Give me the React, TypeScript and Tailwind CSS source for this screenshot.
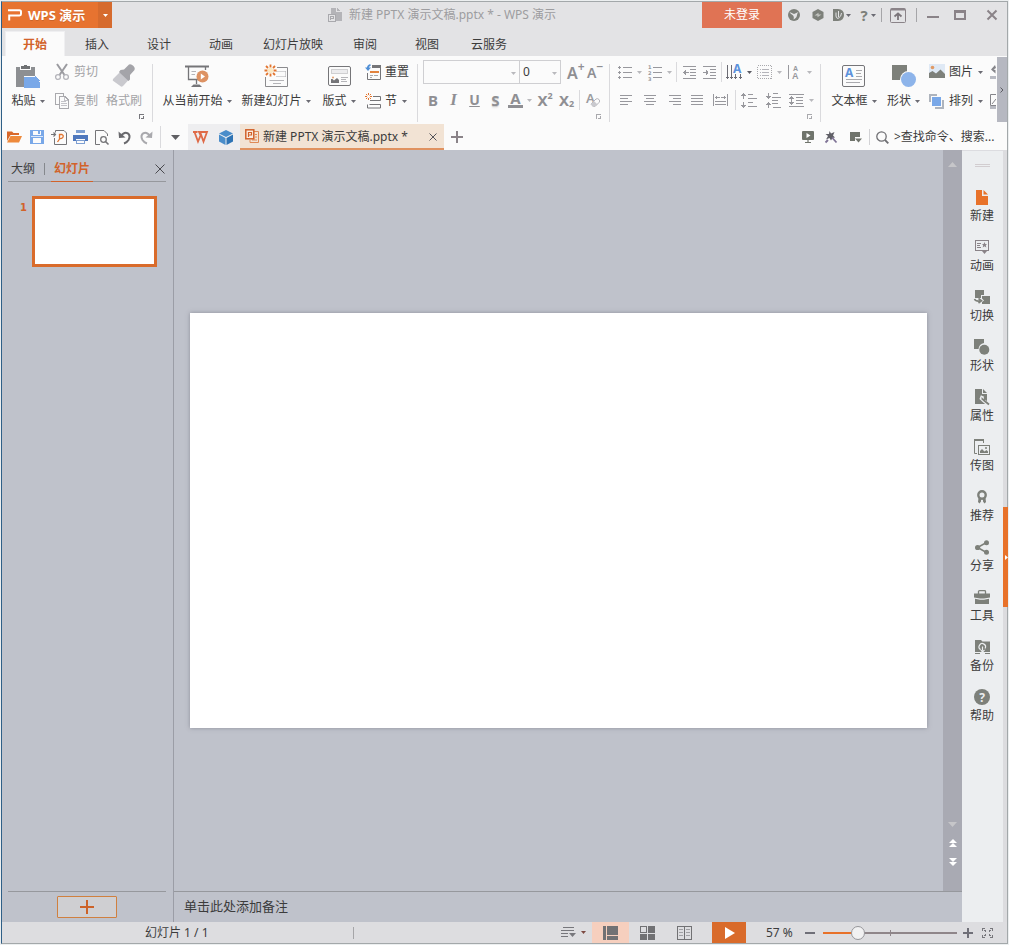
import React, { useState } from "react";

type IconProps = { w: number; h: number; crisp?: boolean; className?: string; children: React.ReactNode };

function Icon({ w, h, crisp, className, children }: IconProps) {
  return (
    <svg
      width={w}
      height={h}
      viewBox={`0 0 ${w} ${h}`}
      fill="none"
      shapeRendering={crisp ? "crispEdges" : "auto"}
      className={`shrink-0 overflow-visible ${className ?? ""}`}
      aria-hidden="true"
    >
      {children}
    </svg>
  );
}

function Caret({ color = "#6b6b73", w = 5 }: { color?: string; w?: number }) {
  return (
    <Icon w={w} h={3} className="block">
      <path d={`M0 0H${w}L${w / 2} 3z`} fill={color} />
    </Icon>
  );
}

const GRAY = "#98989d";
const DARK = "#7d807a";

/* ---------- title bar ---------- */

function TitleBar() {
  return (
    <header className="flex h-[26px] shrink-0 items-stretch">
      <button className="flex w-24 items-center gap-[6px] bg-[#e77330] pl-[6px] text-[13px] font-bold text-white text-shadow-2xs">
        <Icon w={14} h={12}>
          <path d="M0 1.200H11.500Q13 1.200 13 2.700V5Q13 6.400 11.500 6.400H1.200V11.500" stroke="#fff" strokeWidth="2" />
        </Icon>
        <span className="whitespace-nowrap">WPS 演示</span>
      </button>
      <button aria-label="应用菜单" className="flex w-[14px] items-center justify-center bg-[#d66b2e]">
        <Caret color="#fff" />
      </button>
      <div className="flex min-w-0 flex-1 items-center justify-center gap-[6px] pl-[70px] text-[#9d9da0]">
        <Icon w={15} h={15} crisp>
          <path d="M3 0H8V4H14V13H8V6H3z" fill="#b4b4b8" />
          <path d="M9 0L12 3H9z" fill="#b4b4b8" />
          <rect x="0.500" y="6.500" width="7" height="7" stroke="#a9a9ad" fill="#e3e3e5" />
          <path d="M2.500 12V8.500H5.500V10.500H3" stroke="#a9a9ad" />
        </Icon>
        <span className="truncate">新建 PPTX 演示文稿.pptx * - WPS 演示</span>
      </div>
      <button className="w-20 bg-[#e07354] text-white">未登录</button>
      <div className="flex items-center text-[#7d807a]">
        <button aria-label="皮肤" className="flex w-6 justify-center">
          <Icon w={12} h={12}>
            <circle cx="6" cy="6" r="6" fill="#7d807a" />
            <path d="M1.500 3L6 5L10.500 3Q9 4.500 9 6Q9 8.500 5.500 10.500Q6.500 7.500 4.500 6Q2.500 5 1.500 3z" fill="#e3e3e5" />
          </Icon>
        </button>
        <button aria-label="云服务中心" className="flex w-[23px] justify-center">
          <Icon w={12} h={12}>
            <path d="M6 0L11.500 3V9L6 12L0.500 9V3z" fill="#7d807a" />
            <path d="M2.500 6.500L6.500 3.800V5.500L9.500 5.500L5.500 8.300V6.500z" fill="#c3c5c1" />
          </Icon>
        </button>
        <button aria-label="稻壳" className="flex w-[26px] items-center justify-center gap-[2px]">
          <Icon w={11} h={12}>
            <path d="M0 0H5Q11 0.500 11 6Q11 11.500 5 12H0z" fill="#7d807a" />
            <path d="M3 3.500V7Q3 9 5 9.500M5.500 2L5.500 8M8.500 4Q8.500 7.500 5 9.500" stroke="#e3e3e5" strokeWidth="1" />
          </Icon>
          <Caret />
        </button>
        <button aria-label="帮助菜单" className="flex w-[26px] items-center justify-center gap-[3px] text-[15px] font-bold">
          ?<Caret />
        </button>
        <span className="mr-[8px] h-[14px] w-px bg-[#a5a5a8]" />
        <button aria-label="折叠功能区">
          <Icon w={16} h={15}>
            <rect x="0.500" y="0.500" width="15" height="14" rx="1" stroke="#8a8388" />
            <path d="M1 1.500H15" stroke="#8a8388" strokeWidth="2" />
            <path d="M8 12V6M4.500 8.500L8 5.500L11.500 8.500" stroke="#7b757a" strokeWidth="1.800" />
          </Icon>
        </button>
        <span className="ml-[10px] mr-[8px] h-[14px] w-px bg-[#a5a5a8]" />
        <button aria-label="最小化" className="flex w-4 justify-center">
          <Icon w={12} h={12} crisp><rect y="7" width="12" height="2" fill="#8a8388" /></Icon>
        </button>
        <button aria-label="最大化" className="ml-[11px] flex w-4 justify-center">
          <Icon w={12} h={10} crisp>
            <path d="M0 0H12V10H0zM2 3V8H10V3z" fillRule="evenodd" fill="#8a8388" />
          </Icon>
        </button>
        <button aria-label="关闭" className="ml-4 mr-[7px] flex w-4 justify-center">
          <Icon w={10} h={10}><path d="M0.500 0.500L9.500 9.500M9.500 0.500L0.500 9.500" stroke="#8a8388" strokeWidth="2" /></Icon>
        </button>
      </div>
    </header>
  );
}

/* ---------- ribbon tabs ---------- */

function Tabs() {
  const tab = "h-full w-[62px] pt-[2px]";
  return (
    <nav className="flex h-7 shrink-0 items-end pt-[3px]">
      <button className="ml-[3px] mr-px h-full w-[60px] border border-b-0 border-[#efeff1] bg-[#fbfbfb] pt-[2px] font-bold text-[#d2622a]">开始</button>
      <button className={tab}>插入</button>
      <button className={tab}>设计</button>
      <button className={tab}>动画</button>
      <button className="h-full w-[82px] pt-[2px]">幻灯片放映</button>
      <button className={tab}>审阅</button>
      <button className={tab}>视图</button>
      <button className={tab}>云服务</button>
    </nav>
  );
}

/* ---------- ribbon ---------- */

type BigProps = { icon: React.ReactNode; label: string; className: string; caret?: boolean };

function Big({ icon, label, className, caret = true }: BigProps) {
  return (
    <button className={`flex shrink-0 flex-col items-center pt-1 ${className}`}>
      <span className="flex h-6 items-center justify-center">{icon}</span>
      <span className="flex h-[26px] items-center gap-1 whitespace-nowrap">
        {label}
        {caret && <Caret />}
      </span>
    </button>
  );
}

function Tool({ label, className = "w-5", children }: { label: string; className?: string; children: React.ReactNode }) {
  return (
    <button aria-label={label} className={`flex h-6 shrink-0 items-center justify-center ${className}`}>
      {children}
    </button>
  );
}

function Drop({ label, dark }: { label: string; dark?: boolean }) {
  return (
    <button aria-label={label} className="flex h-6 w-[9px] shrink-0 items-center justify-center">
      <Caret color={dark ? "#5b5b63" : "#b9b9bd"} />
    </button>
  );
}

const GroupLine = () => <span className="mt-1 h-[58px] w-px shrink-0 bg-[#dadadd]" />;
const SmallLine = ({ className = "" }: { className?: string }) => <span className={`h-5 w-px shrink-0 bg-[#dadadd] ${className}`} />;

function Launcher({ label, className = "", color = "#a9a9ad" }: { label: string; className?: string; color?: string }) {
  return (
    <button aria-label={label} className={`absolute bottom-[5px] ${className}`}>
      <Icon w={5} h={5} crisp>
        <path d="M0 0H5V1H1V5H0zM2 4H4V2H5V5H2z" fill={color} />
      </Icon>
    </button>
  );
}

function Lines({ rows }: { rows: [number, number][] }) {
  return (
    <Icon w={14} h={10} crisp>
      {rows.map(([x, len], i) => (
        <rect key={i} x={x} y={i * 3} width={len} height="1" fill={GRAY} />
      ))}
    </Icon>
  );
}

function Burst({ x, y }: { x: number; y: number }) {
  return (
    <g transform={`translate(${x} ${y})`}>
      <path d="M0 -6V-3M0 3V6M-6 0H-3M3 0H6M-4.500 -4.500L-2.500 -2.500M4.500 -4.500L2.500 -2.500M-4.500 4.500L-2.500 2.500M4.500 4.500L2.500 2.500" stroke="#e2752f" strokeWidth="1.800" />
      <circle r="2.800" fill="#fbe9c4" />
    </g>
  );
}

function Ribbon() {
  return (
    <section className="flex h-[68px] shrink-0 bg-[#fbfbfb]">
      <div className="flex min-w-0 flex-1 overflow-hidden pt-1">
        {/* clipboard */}
        <div className="relative flex w-[150px] shrink-0">
          <Big
            className="w-[52px]"
            label="粘贴"
            icon={
              <Icon w={24} h={23} crisp>
                <path d="M0 2H4V5H15V2H19V11H8V22H0z" fill="#8d8f92" />
                <path d="M5 1H8V0H11V1H14V4H5z" fill="#6f7173" />
                <path d="M8 12H18L24 18V23H8z" fill="#79a8e8" />
                <path d="M19 11L24 16H19z" fill="#79a8e8" />
              </Icon>
            }
          />
          <div className="flex w-[47px] shrink-0 flex-col gap-[5px] pl-px text-[#a3a3a6]">
            <button className="flex h-6 items-center gap-[5px] whitespace-nowrap">
              <Icon w={14} h={16}>
                <path d="M2 0L9.500 11M12 0L4.500 11" stroke="#9b9ba0" strokeWidth="2" />
                <circle cx="3" cy="13" r="2.400" stroke="#b4b4ba" strokeWidth="1.300" />
                <circle cx="11" cy="13" r="2.400" stroke="#b4b4ba" strokeWidth="1.300" />
              </Icon>
              剪切
            </button>
            <button className="flex h-6 items-center gap-[5px] whitespace-nowrap">
              <Icon w={14} h={16} crisp>
                <path d="M4 11.500H0.500V0.500H8.500V3" stroke="#a9a9ad" />
                <path d="M4.500 3.500H10L13.500 7V15.500H4.500z" stroke="#a9a9ad" />
                <path d="M6 8.500H11M6 10.500H12M6 12.500H12M9.500 4V7.500H13" stroke="#c3c3c8" />
              </Icon>
              复制
            </button>
          </div>
          <Big
            className="w-[46px] text-[#a3a3a6]"
            label="格式刷"
            caret={false}
            icon={
              <Icon w={24} h={24}>
                <path d="M8 8L1 15Q0 16.500 2 17.500L9 22.500Q10.500 23 11.500 21.500L16.500 16z" fill="#c9c9ce" />
                <path d="M8.500 6L12 5.500L17 0.500Q19 -0.500 21.500 2Q23.500 4 22.500 6L18 11L18 15.500L16.500 17L7 8z" fill="#a4a4a9" />
              </Icon>
            }
          />
          <Launcher label="剪贴板选项" className="right-2" color="#77777c" />
        </div>
        <GroupLine />

        {/* slides */}
        <div className="flex w-[264px] shrink-0 pl-[5px]">
          <Big
            className="w-[78px]"
            label="从当前开始"
            icon={
              <Icon w={25} h={23}>
                <path d="M0 1.500H24" stroke="#757578" strokeWidth="2" />
                <path d="M3.500 2V14.500H18M20.500 2V5M11.500 15V19" stroke="#757578" strokeWidth="1.300" />
                <path d="M6 22L8.500 19.500H14.500L17 22z" fill="#757578" />
                <path d="M6.500 6.500H11M6.500 9.500H10" stroke="#b4b4b8" />
                <circle cx="17.500" cy="11.500" r="6" fill="#dd9263" />
                <path d="M15.800 8.500V14.500L20 11.500z" fill="#fff" />
              </Icon>
            }
          />
          <Big
            className="w-20"
            label="新建幻灯片"
            icon={
              <Icon w={24} h={24}>
                <path d="M13 3.500H23.500V22.500H1.500V13" stroke="#8b8b8e" />
                <path d="M12.500 7.500H21.500M12.500 12.500H21.500M21.500 7.500V12.500" stroke="#aaaaae" strokeDasharray="1 1" />
                <path d="M5.500 16.500H20M9 19.500H17" stroke="#b4b4b8" />
                <Burst x={6.500} y={6.500} />
              </Icon>
            }
          />
          <Big
            className="w-[46px]"
            label="版式"
            icon={
              <Icon w={23} h={20}>
                <rect x="0.500" y="0.500" width="22" height="19" rx="1.500" stroke="#757578" />
                <rect x="3.500" y="3.500" width="16" height="4" fill="#ececee" stroke="#aaaaae" strokeDasharray="1 1" />
                <path d="M3 17V13H4.500L6 14.500L9 12L11 14V17z" fill="#757578" />
                <circle cx="5" cy="11.500" r="1" fill="#e2a06f" />
                <path d="M13 11.500H20M13 13.500H18M13 15.500H19" stroke="#b4b4b8" />
              </Icon>
            }
          />
          <div className="flex flex-col gap-[5px] pl-[3px]">
            <button className="flex h-6 items-center gap-1 whitespace-nowrap">
              <Icon w={16} h={16}>
                <path d="M7 2.500H15.500V15.500H2.500V9" stroke="#757578" />
                <path d="M7 2.500H16" stroke="#757578" strokeWidth="3" />
                <path d="M5 8H14" stroke="#e2833f" strokeWidth="2" />
                <path d="M5 11.500H8M9 11.500H13M5 13.500H7" stroke="#aaaaae" />
                <path d="M5.500 0.800Q2.500 1.500 2.800 5" stroke="#4f8fd6" strokeWidth="1.800" />
                <path d="M0 3.500H6L3 7z" fill="#4f8fd6" />
              </Icon>
              重置
            </button>
            <button className="flex h-6 items-center gap-1 whitespace-nowrap">
              <Icon w={16} h={16}>
                <path d="M8 3.500H15.500V7.500H5M4.500 11.500H15.500V15H2.500V11.500" stroke="#757578" />
                <path d="M3.500 0V2M3.500 5V7M0 3.500H2M5 3.500H7M1 1L2.300 2.300M6 1L4.700 2.300M1 6L2.300 4.700M6 6L4.700 4.700" stroke="#e2752f" />
              </Icon>
              节
              <span className="ml-px"><Caret /></span>
            </button>
          </div>
        </div>
        <GroupLine />

        {/* font */}
        <div className="relative flex w-[191px] shrink-0 flex-col gap-1 pl-[5px] text-[#8f8f93]">
          <div className="flex h-6 items-center">
            <span className="relative flex">
              <select aria-label="字体" className="h-6 w-[97px] appearance-none border border-[#cfcfd2] bg-[#fbfbfb] pl-1 text-[#3c3c3c] outline-none">
                <option></option>
              </select>
              <span className="pointer-events-none absolute right-1 top-3"><Caret color="#b9b9bd" /></span>
            </span>
            <span className="relative flex">
              <select aria-label="字号" className="h-6 w-[41px] appearance-none border border-l-0 border-[#cfcfd2] bg-[#fbfbfb] pl-[3px] text-[#3c3c3c] outline-none">
                <option>0</option>
              </select>
              <span className="pointer-events-none absolute right-1 top-3"><Caret color="#b9b9bd" /></span>
            </span>
            <button aria-label="增大字号" className="ml-[6px] flex w-[20px] items-start pt-px text-[16px] font-semibold leading-6">
              A<span className="text-[12px] leading-3">+</span>
            </button>
            <button aria-label="减小字号" className="flex w-[18px] items-start pt-px text-[14px] font-semibold leading-6">
              A<span className="text-[12px] leading-3">−</span>
            </button>
          </div>
          <div className="flex h-6 items-center">
            <Tool label="加粗" className="w-[20px] text-[15px] font-bold">B</Tool>
            <Tool label="倾斜" className="w-[21px] font-['Liberation_Serif'] text-[17px] font-bold italic">I</Tool>
            <Tool label="下划线" className="w-[21px] text-[14px] font-bold underline">U</Tool>
            <Tool label="阴影" className="w-[21px] text-[15px] font-bold text-shadow-sm">S</Tool>
            <Tool label="字体颜色" className="w-[19px]">
              <span className="flex h-[16px] w-[15px] items-center justify-center border-b-[3px] border-[#8f8f93] pb-[1px] text-[15px] font-bold leading-3">A</span>
            </Tool>
            <Drop label="字体颜色选项" />
            <Tool label="上标" className="w-[22px] text-[15px] font-bold">
              X<span className="mb-2 text-[9px] leading-3">2</span>
            </Tool>
            <Tool label="下标" className="w-[21px] text-[15px] font-bold">
              X<span className="mt-2 text-[9px] leading-3">2</span>
            </Tool>
            <SmallLine className="mx-[2px]" />
            <Tool label="清除格式" className="w-[22px]">
              <Icon w={15} h={16}>
                <text x="0" y="11" fontSize="13" fontWeight="600" fill="#9b9ba0">A</text>
                <path d="M5.500 11.500L10 7Q11.500 6 13 7.500Q14.500 9 13 10.500L9 14.500Q7.500 15 6 13.500Q4.800 12.500 5.500 11.500z" fill="#fbfbfb" stroke="#b4b4ba" />
                <path d="M8 9L11.500 12.500L9 14.500H7L5.500 12z" fill="#c9c9ce" />
              </Icon>
            </Tool>
          </div>
          <Launcher label="字体选项" className="right-2" />
        </div>
        <GroupLine />

        {/* paragraph */}
        <div className="relative flex w-[210px] shrink-0 flex-col gap-1 pl-[4px]">
          <div className="flex h-6 items-center pl-px">
            <Tool label="项目符号">
              <Icon w={14} h={13} crisp>
                <path d="M0 1H3V2H0zM1 0H2V3H1zM0 6H3V7H0zM1 5H2V8H1zM0 11H3V12H0zM1 10H2V13H1zM5 1H14V2H5zM5 6H14V7H5zM5 11H14V12H5z" fill={GRAY} />
              </Icon>
            </Tool>
            <Drop label="项目符号选项" />
            <Tool label="编号" className="ml-px w-5">
              <Icon w={14} h={17} className="font-['DejaVu_Sans']">
                <text x="0" y="5" fontSize="5" fontWeight="bold" fill={GRAY}>1</text>
                <text x="0" y="11" fontSize="5" fontWeight="bold" fill={GRAY}>2</text>
                <text x="0" y="17" fontSize="5" fontWeight="bold" fill={GRAY}>3</text>
                <path d="M5 3H14V4H5zM5 8H14V9H5zM5 13H14V14H5z" fill={GRAY} />
              </Icon>
            </Tool>
            <Drop label="编号选项" />
            <SmallLine className="mx-[2px]" />
            <Tool label="减少缩进">
              <Icon w={13} h={13} crisp>
                <path d="M0 0H13V1H0zM7 3H13V4H7zM7 6H13V7H7zM7 9H13V10H7zM0 12H13V13H0zM0 6H6V7H0zM1 5H3V8H1zM2 4H3V9H2z" fill={GRAY} />
              </Icon>
            </Tool>
            <Tool label="增加缩进">
              <Icon w={13} h={13} crisp>
                <path d="M0 0H13V1H0zM7 3H13V4H7zM7 6H13V7H7zM7 9H13V10H7zM0 12H13V13H0zM0 6H5V7H0zM3 5H5V8H3zM3 4H4V9H3z" fill={GRAY} />
              </Icon>
            </Tool>
            <SmallLine className="mx-[2px]" />
            <Tool label="文字方向" className="w-[21px]">
              <Icon w={17} h={16} crisp>
                <path d="M1 1H2V15H1zM5 1H6V15H5zM9 10H10V15H9zM14 10H15V15H14z" fill="#6b6b73" />
                <path d="M0 13H3V14H0zM4 13H7V14H4zM8 13H11V14H8zM13 13H16V14H13z" fill="#6b6b73" />
                <text x="7" y="9" fontSize="12" fontWeight="bold" fill="#5c92dc">A</text>
              </Icon>
            </Tool>
            <Drop label="文字方向选项" dark />
            <Tool label="对齐文本" className="w-[21px]">
              <Icon w={15} h={14} crisp>
                <rect x="0.500" y="0.500" width="14" height="13" stroke="#a9a9ad" strokeDasharray="1 1" />
                <path d="M3 4H4V5H3zM5 4H12V5H5zM3 7H4V8H3zM5 7H12V8H5zM3 10H4V11H3zM5 10H12V11H5z" fill="#b4b4ba" />
              </Icon>
            </Tool>
            <Drop label="对齐文本选项" />
            <Tool label="字符间距" className="w-[21px]">
              <Icon w={13} h={16} className="font-['Liberation_Sans']">
                <path d="M0 1H1V15H0z" fill={GRAY} />
                <text x="5" y="7" fontSize="7" fontWeight="bold" fill={GRAY}>A</text>
                <text x="4" y="15" fontSize="9" fontWeight="bold" fill={GRAY}>A</text>
              </Icon>
            </Tool>
            <Drop label="字符间距选项" />
          </div>
          <div className="flex h-6 items-center">
            <Tool label="左对齐" className="w-6"><Lines rows={[[1, 12], [1, 8], [1, 12], [1, 8]]} /></Tool>
            <Tool label="居中" className="w-6"><Lines rows={[[1, 12], [3, 8], [1, 12], [3, 8]]} /></Tool>
            <Tool label="右对齐" className="w-6"><Lines rows={[[2, 12], [6, 8], [2, 12], [6, 8]]} /></Tool>
            <Tool label="两端对齐" className="w-[22px]"><Lines rows={[[1, 12], [1, 12], [1, 12], [1, 12]]} /></Tool>
            <Tool label="分散对齐" className="w-6">
              <Icon w={15} h={12} crisp>
                <path d="M0 0H1V12H0zM14 0H15V12H14zM2 3H7V4H2zM8 3H13V4H8zM3 2H4V5H3zM11 2H12V5H11zM2 7H13V8H2zM2 10H13V11H2z" fill={GRAY} />
              </Icon>
            </Tool>
            <SmallLine className="ml-[3px] mr-px" />
            <Tool label="行距" className="w-6">
              <Icon w={16} h={15} crisp>
                <path d="M2 0H3V6H2zM1 1H4V2H1zM0 2H5V3H0zM2 9H3V15H2zM0 12H5V13H0zM1 13H4V14H1zM7 1H12V2H7zM7 5H16V6H7zM7 9H12V10H7zM7 13H16V14H7z" fill={GRAY} />
              </Icon>
            </Tool>
            <Tool label="段前间距" className="w-6">
              <Icon w={15} h={15} crisp>
                <path d="M2 0H3V6H2zM0 3H5V4H0zM1 4H4V5H1zM2 9H3V15H2zM1 10H4V11H1zM0 11H5V12H0zM7 0H12V1H7zM6 4H15V5H6zM6 7H12V8H6zM6 10H12V11H6zM7 14H15V15H7z" fill={GRAY} />
              </Icon>
            </Tool>
            <Tool label="段落间距" className="w-[22px]">
              <Icon w={15} h={13} crisp>
                <path d="M0 0H15V1H0zM7 3H14V4H7zM7 6H14V7H7zM7 9H14V10H7zM0 12H15V13H0zM2 2H3V11H2zM0 4H5V5H0zM1 3H4V4H1zM0 8H5V9H0zM1 9H4V10H1z" fill={GRAY} />
              </Icon>
            </Tool>
            <Drop label="段落间距选项" />
          </div>
          <Launcher label="段落选项" className="right-2" />
        </div>
        <GroupLine />

        {/* insert objects */}
        <div className="flex shrink-0 pl-[5px]">
          <Big
            className="w-14"
            label="文本框"
            icon={
              <Icon w={24} h={22}>
                <rect x="0.500" y="0.500" width="22" height="21" rx="1.500" stroke="#757578" />
                <text x="3" y="12" fontSize="12" fontWeight="bold" fill="#5c92dc">A</text>
                <path d="M14 5.500H20M14 8.500H19M14 11.500H20M4 14.500H20M4 17.500H18" stroke="#aaaaae" />
              </Icon>
            }
          />
          <Big
            className="w-[43px]"
            label="形状"
            icon={
              <Icon w={24} h={23}>
                <rect width="15" height="15" fill="#7d807a" />
                <circle cx="16.500" cy="14.500" r="8.500" fill="#fbfbfb" />
                <circle cx="16.500" cy="14.500" r="7.500" fill="#8db4ea" />
              </Icon>
            }
          />
          <div className="flex shrink-0 flex-col gap-[5px] pl-1">
            <button className="flex h-6 items-center gap-1 whitespace-nowrap">
              <Icon w={16} h={15} className="mb-[2px]">
                <rect width="16" height="12" fill="#dfe9f5" />
                <circle cx="3.500" cy="3.500" r="1.800" fill="#e09a65" />
                <path d="M0 14V9L3.500 7L7 9.500L11.500 5.500L16 10V14z" fill="#7d807a" />
              </Icon>
              图片
              <span className="ml-px"><Caret /></span>
            </button>
            <button className="flex h-6 items-center gap-1 whitespace-nowrap">
              <Icon w={16} h={15} crisp>
                <path d="M0 0H8V2H2V8H0zM15 6V15H6V13H13V6z" fill="#aeb4bd" />
                <rect x="3" y="3" width="9" height="9" fill="#79a8e8" />
              </Icon>
              排列
              <span className="ml-px"><Caret /></span>
            </button>
          </div>
          <div className="ml-[6px] flex w-[7px] shrink-0 flex-col gap-[5px] overflow-hidden">
            <Tool label="填充" className="w-[7px]">
              <Icon w={6} h={14}>
                <path d="M5 0L1 4.500L5.500 8.500V5L3.500 4.500L6 3z" fill="#85858a" />
                <rect y="11" width="6" height="3" fill="#b8bac2" />
              </Icon>
            </Tool>
            <Tool label="轮廓" className="w-[7px]">
              <Icon w={6} h={15}>
                <path d="M6 0.500H0.500V11.500H6M2 10L6 5" stroke="#85858a" />
                <rect y="12" width="6" height="3" fill="#b8bac2" />
              </Icon>
            </Tool>
          </div>
        </div>
      </div>
      <button aria-label="向右滚动" className="mt-px flex h-[65px] w-[10px] shrink-0 items-center justify-center bg-[#b6b8c1]">
        <Icon w={4} h={6}><path d="M0.500 0.500L3 3L0.500 5.500" stroke="#5d5d63" /></Icon>
      </button>
    </section>
  );
}

/* ---------- quick access and document tabs ---------- */

function QuickBar() {
  const cell = "flex w-[22px] shrink-0 justify-center";
  return (
    <section className="flex h-[26px] shrink-0 items-center bg-[#fbfbfb] pl-px">
      <button aria-label="打开" className={cell}>
        <Icon w={15} h={12}>
          <path d="M0 10V0.500H5L6.500 2H12V4H3.500z" fill="#d9682a" />
          <path d="M3.500 5H15L12 11.500H0z" fill="#ee8a3c" />
        </Icon>
      </button>
      <button aria-label="保存" className={`${cell} ml-px`}>
        <Icon w={14} h={14} crisp>
          <path d="M0 0H13L14 1V14H0z" fill="#79a8e8" />
          <path d="M3 1H11V5H3zM3 8H11V13H3z" fill="#fbfbfb" />
          <path d="M1 6H13V7H1z" fill="#dbe8fa" />
          <rect x="8" y="1" width="2" height="3" fill="#79a8e8" />
        </Icon>
      </button>
      <button aria-label="输出为PDF" className={cell}>
        <Icon w={16} h={15}>
          <path d="M4.500 2.500V0.500H13L15.500 3V14.500H3.500V8" stroke="#757578" />
          <path d="M0 4.500H4M2.500 2.500L4.500 4.500L2.500 6.500" stroke="#757578" strokeWidth="1.200" />
          <path d="M6.500 12L8.500 9V4.500H11Q13 5.500 11.800 7.500Q10.500 8.700 8.500 8.500" stroke="#e2752f" strokeWidth="1.300" />
        </Icon>
      </button>
      <button aria-label="打印" className={`${cell} -ml-px`}>
        <Icon w={15} h={14} crisp>
          <rect x="3" y="0" width="9" height="3" fill="#7d9fd2" />
          <path d="M0 5H15V11H12V9H3V11H0z" fill="#4f78bd" />
          <path d="M3 10H12V14H3z" fill="#7d9fd2" />
          <path d="M4 11H11V13H4z" fill="#fbfbfb" />
        </Icon>
      </button>
      <button aria-label="打印预览" className={cell}>
        <Icon w={14} h={15}>
          <path d="M5 14.500H0.500V0.500H9L12.500 4V6" stroke="#757578" />
          <circle cx="8.500" cy="9.500" r="2.800" stroke="#757578" strokeWidth="1.300" />
          <path d="M10.500 11.500L13.500 14.500" stroke="#757578" strokeWidth="1.600" />
        </Icon>
      </button>
      <button aria-label="撤销" className={cell}>
        <Icon w={13} h={13}>
          <path d="M0.500 0.500L1 7L7.500 6.500z" fill="#68686c" />
          <path d="M3 5Q6 0.800 9.500 2.200Q13 4.500 10.500 9Q9 11.500 6 12.500" stroke="#68686c" strokeWidth="2" />
        </Icon>
      </button>
      <button aria-label="恢复" className={cell}>
        <Icon w={13} h={13}>
          <path d="M12.500 0.500L12 7L5.500 6.500z" fill="#a9a9ad" />
          <path d="M10 5Q7 0.800 3.500 2.200Q0 4.500 2.500 9Q4 11.500 7 12.500" stroke="#a9a9ad" strokeWidth="2" />
        </Icon>
      </button>
      <span className="ml-[3px] h-[22px] w-px shrink-0 bg-[#dadadd]" />
      <button aria-label="更多命令" className="flex w-[27px] shrink-0 justify-center pl-[2px]">
        <Icon w={9} h={5}><path d="M0 0H9L4.500 5z" fill="#5f5f63" /></Icon>
      </button>
      <div className="flex h-full w-[52px] shrink-0 items-center bg-[#eeeef0]">
        <button aria-label="WPS 首页" className="flex w-[25px] justify-center">
          <Icon w={16} h={12}>
            <path d="M0 1H4.500M1.500 1L5 10.500L8 3.500L10.500 10.500L14 1H6L8 5" stroke="#df6a47" strokeWidth="1.800" />
          </Icon>
        </button>
        <button aria-label="在线模板" className="flex w-[26px] justify-center">
          <Icon w={14} h={15}>
            <path d="M7 0L14 3.500L7 7L0 3.500z" fill="#4a8dca" />
            <path d="M0 4.500L6.500 8V15L0 11.500z" fill="#4a8dca" />
            <path d="M14 4.500L7.500 8V15L14 11.500z" fill="#2f74b5" />
          </Icon>
        </button>
      </div>
      <div className="flex h-full w-[204px] shrink-0 items-center border-b-2 border-[#e09260] bg-[#f2e3d4] pl-[5px]">
        <Icon w={14} h={14}>
          <path d="M9 2.500H13.500V13.500H5V11" stroke="#df8a56" />
          <path d="M10 5.500H12M10 8H12M7 11H12" stroke="#df8a56" />
          <rect x="0.800" y="0.800" width="8" height="9" stroke="#d2622a" strokeWidth="1.500" fill="#fbeee2" />
          <path d="M3.500 8V3.500H6.500V6H4" stroke="#d2622a" strokeWidth="1.200" />
        </Icon>
        <a href="#document" className="ml-1 flex-1 whitespace-nowrap pt-[2px]">新建 PPTX 演示文稿.pptx *</a>
        <button aria-label="关闭文档" className="mr-[7px] pt-px">
          <Icon w={8} h={8}><path d="M0.500 0.500L7.500 7.500M7.500 0.500L0.500 7.500" stroke="#55555a" /></Icon>
        </button>
      </div>
      <button aria-label="新建文档" className="flex w-[26px] shrink-0 justify-center">
        <Icon w={12} h={12} crisp><path d="M5 0H7V5H12V7H7V12H5V7H0V5H5z" fill="#8a8388" /></Icon>
      </button>
      <div className="ml-auto flex shrink-0 items-center">
        <button aria-label="播放" className={cell}>
          <Icon w={12} h={12}>
            <rect width="12" height="9" rx="1" fill="#70746c" />
            <path d="M4.500 2V7L8.500 4.500z" fill="#fff" />
            <path d="M6 9V11M3 11.500H9" stroke="#70746c" strokeWidth="1.200" />
          </Icon>
        </button>
        <button aria-label="魔法棒" className="flex w-6 justify-center">
          <Icon w={12} h={12}>
            <path d="M4.500 0L6 2.500L9.500 1L8 4.500L10 6.500L7.500 7L6 9.500L4.500 7L1 8.500L3 5L0.500 3L4 3z" fill="#5f5f66" />
            <path d="M7 6.500L11.500 11.500M3 9L0.500 11.500" stroke="#7f7396" strokeWidth="1.800" />
          </Icon>
        </button>
        <button aria-label="自定义" className="flex w-[26px] justify-center">
          <Icon w={12} h={11}>
            <path d="M0 0H10V5H5V9H0z" fill="#70746c" />
            <path d="M5 6.500H12L8.500 10.500z" fill="#70746c" />
          </Icon>
        </button>
        <span className="h-4 w-px bg-[#d2d2d5]" />
        <label htmlFor="command-search" className="flex w-[24px] justify-center">
          <Icon w={13} h={13}>
            <circle cx="5.500" cy="5.500" r="4.700" stroke="#6f6f73" strokeWidth="1.300" />
            <path d="M9 9L12.300 12.300" stroke="#6f6f73" strokeWidth="1.800" />
          </Icon>
        </label>
        <input id="command-search" aria-label="查找命令" placeholder=">查找命令、搜索..." className="w-[113px] bg-transparent outline-none placeholder:text-[#3c3c3c]" />
      </div>
    </section>
  );
}

/* ---------- slide list ---------- */

function SlideList() {
  return (
    <aside className="flex w-[172px] shrink-0 flex-col border-r border-[#9b9da6] pl-[6px] pr-[7px]">
      <div className="flex h-8 shrink-0 items-stretch border-b border-[#96989d] pl-[3px] pt-[6px]">
        <button>大纲</button>
        <span className="ml-[9px] mr-[6px] h-3 w-px self-center bg-[#85888d]" />
        <button className="relative w-[42px] font-bold text-[#d2622a]">
          幻灯片
          <span className="absolute -bottom-px left-0 h-px w-full bg-[#d2622a]" />
        </button>
        <button aria-label="关闭窗格" className="ml-auto mr-px">
          <Icon w={10} h={10}><path d="M0.500 0.500L9.500 9.500M9.500 0.500L0.500 9.500" stroke="#4a4a4f" /></Icon>
        </button>
      </div>
      <ol className="flex-1 pt-[14px]">
        <li className="flex items-start">
          <span className="w-6 pr-[5px] pt-[6px] text-right font-['DejaVu_Sans'] text-[10px] font-bold leading-3 text-[#d2622a]">1</span>
          <button aria-label="幻灯片 1" className="h-[71px] w-[125px] border-[3px] border-[#d96b2b] bg-white" />
        </li>
      </ol>
      <div className="flex h-[31px] shrink-0 items-start justify-center border-t border-[#96989d] pt-1">
        <button aria-label="新建幻灯片" className="flex h-[22px] w-[60px] items-center justify-center rounded-[1px] border border-[#d0803f] bg-[#cfcfd2]">
          <Icon w={14} h={14} crisp><path d="M6 0H8V6H14V8H8V14H6V8H0V6H6z" fill="#cc6228" /></Icon>
        </button>
      </div>
    </aside>
  );
}

/* ---------- canvas ---------- */

function Canvas() {
  return (
    <main className="flex min-w-0 flex-1 flex-col">
      <div className="flex flex-1">
        <div className="flex min-w-0 flex-1 items-center px-4">
          <div className="aspect-[737/415] w-full bg-white shadow-[0_0_4px_rgba(90,92,105,0.5)]" />
        </div>
        <div className="flex w-[19px] shrink-0 flex-col items-center bg-[#a9aab3] pb-[25px] pt-3">
          <button aria-label="向上滚动"><Icon w={9} h={5} className="block"><path d="M0 5H9L4.500 0z" fill="#c6c6c9" /></Icon></button>
          <span className="flex-1" />
          <button aria-label="向下滚动"><Icon w={9} h={5} className="block"><path d="M0 0H9L4.500 5z" fill="#c6c6c9" /></Icon></button>
          <button aria-label="上一张幻灯片" className="mt-3">
            <Icon w={8} h={8} className="block"><path d="M0 4H8L4 0zM0 8H8L4 4z" fill="#fff" /></Icon>
          </button>
          <button aria-label="下一张幻灯片" className="mt-[11px]">
            <Icon w={8} h={8} className="block"><path d="M0 0H8L4 4zM0 4H8L4 8z" fill="#fff" /></Icon>
          </button>
        </div>
      </div>
      <div className="h-[31px] shrink-0 border-t border-[#96989d] pl-[10px]">
        <input aria-label="备注" placeholder="单击此处添加备注" className="h-7 w-full bg-transparent text-[13px] outline-none placeholder:text-[#3c3c3c]" />
      </div>
    </main>
  );
}

/* ---------- task pane ---------- */

const paneItems: { label: string; icon: React.ReactNode }[] = [
  {
    label: "新建",
    icon: (
      <Icon w={12} h={15}>
        <path d="M0 0H6V6H12V15H0z" fill="#e8722a" />
        <path d="M7.500 0L12 4.500H7.500z" fill="#e8722a" />
      </Icon>
    ),
  },
  {
    label: "动画",
    icon: (
      <Icon w={14} h={14}>
        <rect x="0.500" y="0.500" width="13" height="10" stroke="#8a8388" />
        <path d="M2 3.500H6M2 5.500H5M2 7.500H6" stroke="#8a8388" />
        <path d="M9.500 2L10.300 4H12L10.800 5.300L11.300 7.500L9.500 6.300L7.700 7.500L8.200 5.300L7 4H8.700z" fill="#8a8388" />
        <path d="M7 11H12L9.500 14z" fill="#8a8388" />
      </Icon>
    ),
  },
  {
    label: "切换",
    icon: (
      <Icon w={16} h={15}>
        <path d="M1 0H10V5H7V8H1z" fill={DARK} />
        <path d="M8 6H16V14H8V12L10 10.500L8 8.500z" fill={DARK} />
        <path d="M0.500 9Q1.500 11.500 6 11M4.500 8.500L7.500 10.800L4.500 13" stroke={DARK} strokeWidth="1.600" />
      </Icon>
    ),
  },
  {
    label: "形状",
    icon: (
      <Icon w={16} h={16}>
        <path d="M0 0H10V4Q5 5 4.500 10H0z" fill={DARK} />
        <circle cx="10.300" cy="10.700" r="5" fill={DARK} />
      </Icon>
    ),
  },
  {
    label: "属性",
    icon: (
      <Icon w={14} h={16}>
        <path d="M0 0H7V5H12V15H0z" fill={DARK} />
        <path d="M8 0L12 4H8z" fill={DARK} />
        <path d="M7.500 7L6.500 9.500L8.500 11.500L14 16" stroke="#eceef0" strokeWidth="3.500" />
        <path d="M8.500 11L14 15.500" stroke={DARK} strokeWidth="1.800" />
        <path d="M6.500 8L6.500 10.500L8.500 12L10.500 10.500L10 8.500L8.500 10z" fill={DARK} />
      </Icon>
    ),
  },
  {
    label: "传图",
    icon: (
      <Icon w={16} h={16}>
        <path d="M3 14.500H0.500V0.500H9.500V4" stroke={DARK} />
        <path d="M0 1H10" stroke={DARK} strokeWidth="2" />
        <rect x="4.500" y="6.500" width="11" height="9" stroke={DARK} fill="#eceef0" />
        <path d="M6 14V12L8 10L10.500 12.500L12.500 11L14 12.500V14z" fill={DARK} />
        <circle cx="12" cy="9" r="1" fill={DARK} />
      </Icon>
    ),
  },
  {
    label: "推荐",
    icon: (
      <Icon w={10} h={14}>
        <circle cx="5" cy="5" r="3.700" stroke={DARK} strokeWidth="2.400" />
        <path d="M1.500 8H4V11.500L2.500 13.500L1 12zM8.500 8H6V11.500L7.500 13.500L9 12z" fill={DARK} />
      </Icon>
    ),
  },
  {
    label: "分享",
    icon: (
      <Icon w={14} h={15}>
        <path d="M11.500 2.500L2.500 7.500L11.500 12.500" stroke={DARK} strokeWidth="1.500" />
        <circle cx="11.500" cy="2.700" r="2.500" fill={DARK} />
        <circle cx="2.600" cy="7.500" r="2.600" fill={DARK} />
        <circle cx="11.500" cy="12.300" r="2.500" fill={DARK} />
      </Icon>
    ),
  },
  {
    label: "工具",
    icon: (
      <Icon w={16} h={14}>
        <path d="M4.500 4V1.500Q4.500 0.700 5.500 0.700H10.500Q11.500 0.700 11.500 1.500V4" stroke={DARK} strokeWidth="1.300" />
        <path d="M0 3.500H16V7.500L10 8.500H6L0 7.500z" fill={DARK} />
        <path d="M1 8.700L6 9.700H10L15 8.700V14H1z" fill={DARK} />
      </Icon>
    ),
  },
  {
    label: "备份",
    icon: (
      <Icon w={15} h={14}>
        <path d="M0 0H6L7.500 1.500H15V12H0z" fill={DARK} />
        <path d="M0 13.500H5M10 13.500H15" stroke={DARK} />
        <path d="M5.500 9.500A3.200 3.200 0 1 1 10 8.500M7.500 10.500V6.500" stroke="#eceef0" strokeWidth="1.200" />
        <path d="M4.500 9L7.500 13L10.500 9.500L7.500 10.500z" fill="#eceef0" />
      </Icon>
    ),
  },
  {
    label: "帮助",
    icon: (
      <Icon w={16} h={16}>
        <circle cx="8" cy="8" r="8" fill={DARK} />
        <text x="8" y="12.500" fontSize="12" fontWeight="bold" textAnchor="middle" fill="#eceef0">?</text>
      </Icon>
    ),
  },
];

function TaskPane() {
  return (
    <aside className="flex shrink-0">
      <nav className="w-[41px] border-t border-[#dcdce0] bg-[#eceef0] pt-[13px]">
        <div className="mx-auto mb-5 h-[3px] w-[15px] border-y border-[#d2cdd0] pr-px" />
        {paneItems.map((item) => (
          <button key={item.label} className="flex h-[50px] w-full flex-col items-center pr-px">
            <span className="flex h-5 items-center">{item.icon}</span>
            <span className="pt-px leading-4">{item.label}</span>
          </button>
        ))}
      </nav>
      <div className="w-1 bg-[#dcdcdf] pt-[357px]">
        <button aria-label="展开任务窗格" className="flex h-[100px] w-[5px] items-center justify-end bg-[#e8722a]">
          <Icon w={3} h={5}><path d="M0 0L3 2.500L0 5z" fill="#fff" /></Icon>
        </button>
      </div>
    </aside>
  );
}

/* ---------- status bar ---------- */

const MIN_ZOOM = 10;
const MAX_ZOOM = 210;

function StatusBar() {
  const [zoom, setZoom] = useState(57);
  const filled = ((zoom - MIN_ZOOM) / (MAX_ZOOM - MIN_ZOOM)) * 100;
  return (
    <footer className="flex h-[21px] shrink-0 items-center bg-[#dddde0]">
      <span className="ml-[143px] w-[208px] whitespace-nowrap text-[12px]">幻灯片 1 / 1</span>
      <span className="h-3 w-px bg-[#a5a5a8]" />
      <div className="ml-auto flex h-full items-center">
        <button aria-label="备注选项" className="mr-[6px] flex items-center gap-[5px]">
          <Icon w={15} h={11}>
            <path d="M2 0.500H13M0 3.500H13M0 6.500H7M0 9.500H7" stroke="#77777c" />
            <path d="M8 6H15L11.500 10z" fill="#77777c" />
          </Icon>
          <Caret color="#7d4a42" />
        </button>
        <button aria-label="普通视图" className="flex h-full w-[37px] items-center justify-center bg-[#f6cfbe]">
          <Icon w={15} h={14} crisp>
            <path d="M0 0H3V14H0zM4 0H15V9H4zM4 10H15V14H4z" fill="#717174" />
          </Icon>
        </button>
        <button aria-label="幻灯片浏览" className="flex w-[37px] justify-center">
          <Icon w={15} h={14} crisp>
            <rect x="0.500" y="0.500" width="6" height="6" stroke="#717174" />
            <path d="M8 0H15V7H8zM0 8H7V14H0zM8 8H15V14H8z" fill="#717174" />
          </Icon>
        </button>
        <button aria-label="阅读视图" className="flex w-[37px] justify-center">
          <Icon w={15} h={14} crisp>
            <path d="M0.500 0.500H14.500V13.500H0.500zM7.500 0V14" stroke="#717174" />
            <path d="M2 3.500H6M2 6.500H6M2 9.500H6M9 3.500H13M9 6.500H13M9 9.500H13" stroke="#a0a0a4" />
          </Icon>
        </button>
        <button aria-label="从当前幻灯片放映" className="ml-[9px] flex h-full w-[34px] items-center justify-center bg-[#d96b2b] pl-px">
          <Icon w={10} h={12}><path d="M0 0L10 6L0 12z" fill="#fff" /></Icon>
        </button>
        <output className="w-[59px] whitespace-nowrap pl-5 text-[12px]">{zoom} %</output>
        <button aria-label="缩小" className="flex w-[10px] justify-center" onClick={() => setZoom(Math.max(MIN_ZOOM, zoom - 10))}>
          <Icon w={10} h={2} crisp><rect width="10" height="2" fill="#6f6f78" /></Icon>
        </button>
        <span className="relative ml-2 flex h-4 w-[134px] items-center">
          <span className="absolute left-1/2 top-[5px] h-[6px] w-px bg-[#8f868a]" />
          <input
            type="range"
            aria-label="显示比例"
            min={MIN_ZOOM}
            max={MAX_ZOOM}
            value={zoom}
            onChange={(e) => setZoom(Number(e.target.value))}
            style={{ backgroundImage: `linear-gradient(to right, #e8722a ${filled}%, #8f868a ${filled}%)` }}
            className="relative h-[2px] w-full appearance-none outline-none [&::-webkit-slider-thumb]:h-[14px] [&::-webkit-slider-thumb]:w-[14px] [&::-webkit-slider-thumb]:appearance-none [&::-webkit-slider-thumb]:rounded-full [&::-webkit-slider-thumb]:border [&::-webkit-slider-thumb]:border-[#96969a] [&::-webkit-slider-thumb]:bg-[#f1f1f2]"
          />
        </span>
        <button aria-label="放大" className="ml-[6px]" onClick={() => setZoom(Math.min(MAX_ZOOM, zoom + 10))}>
          <Icon w={10} h={10} crisp><path d="M4 0H6V4H10V6H6V10H4V6H0V4H4z" fill="#6f6f78" /></Icon>
        </button>
        <button aria-label="最佳显示比例" className="ml-[9px] mr-[14px]">
          <Icon w={11} h={10} crisp>
            <path d="M0 0H3V1H1V3H0zM8 0H11V3H10V1H8zM0 7H1V9H3V10H0zM10 7H11V10H8V9H10zM2 2H4V4H3V3H2zM7 2H9V3H8V4H7zM2 7H3V6H4V8H2zM7 6H8V7H9V8H7z" fill="#77777c" />
          </Icon>
        </button>
      </div>
    </footer>
  );
}

export default function App() {
  return (
    <div className="flex min-h-screen bg-[#eceff0] p-px font-['Noto_Sans','Noto_Sans_CJK_SC',sans-serif] text-[12px] leading-4 text-[#3c3c3c]">
      <div className="flex min-w-0 flex-1 flex-col border border-[#a3a8aa] border-l-[#2f5f87] bg-[#e3e3e5]">
        <TitleBar />
        <Tabs />
        <Ribbon />
        <QuickBar />
        <div className="flex flex-1 bg-[#bfc2cb]">
          <SlideList />
          <Canvas />
          <TaskPane />
        </div>
        <StatusBar />
      </div>
    </div>
  );
}
